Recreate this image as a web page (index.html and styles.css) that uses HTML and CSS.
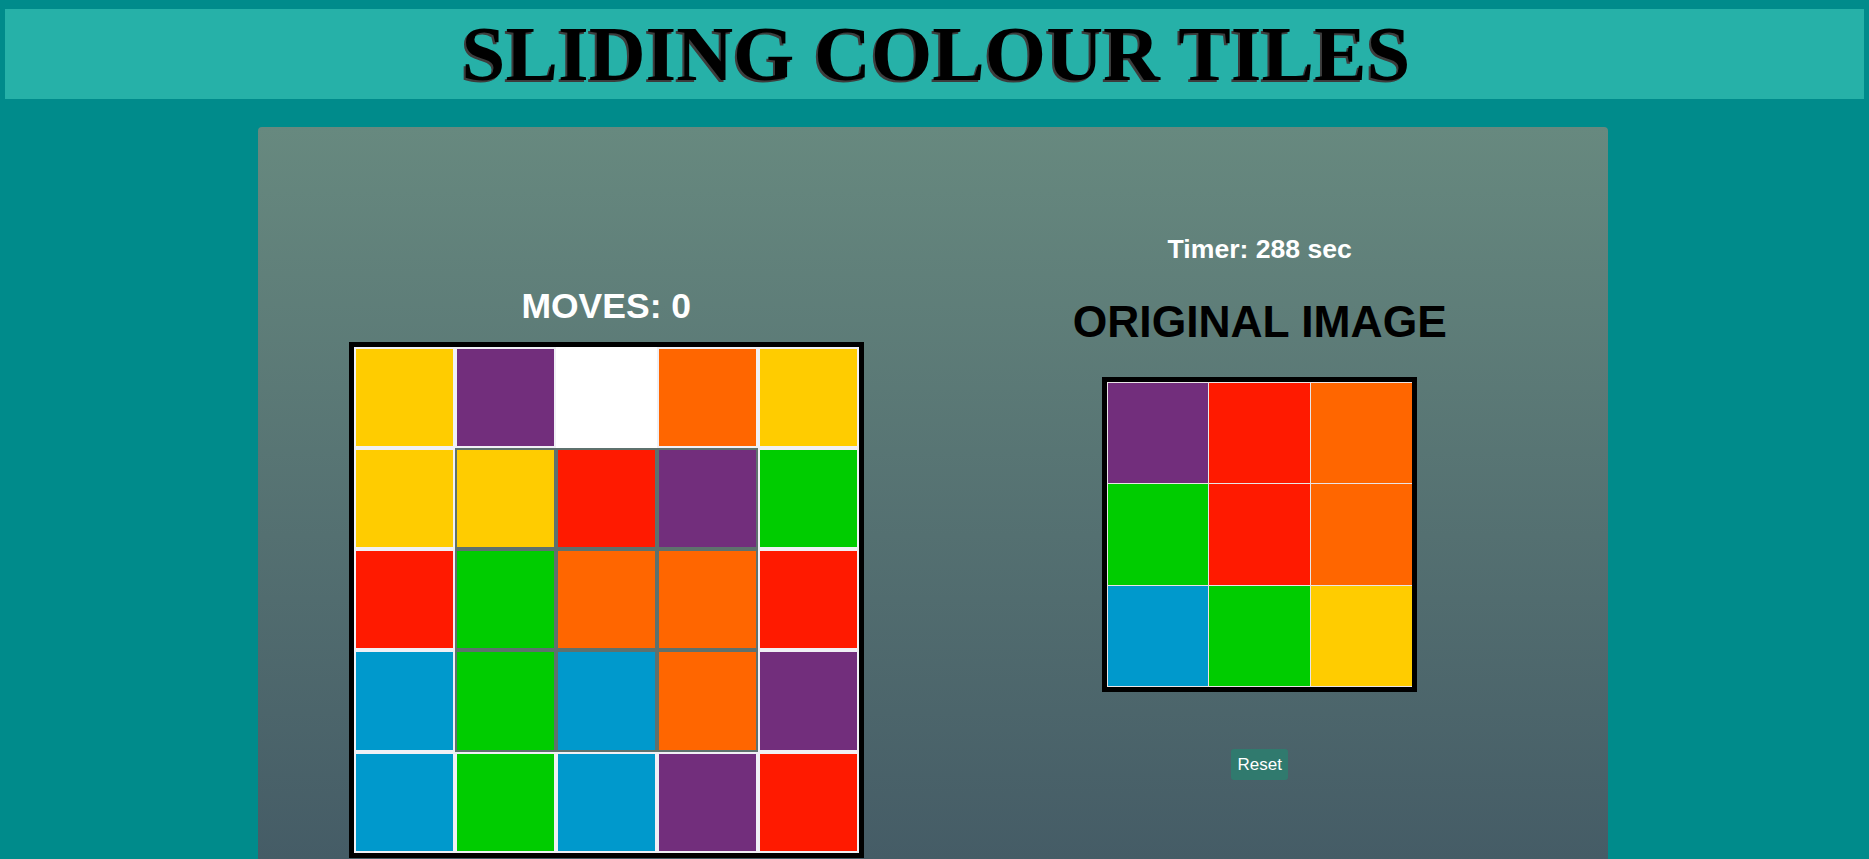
FILE: index.html
```html
<!DOCTYPE html>
<html lang="en">
<head>
<meta charset="utf-8">
<title>Sliding Colour Tiles</title>
<link rel="stylesheet" href="styles.css">
</head>
<body>
<header class="banner">
  <h1 class="banner-title">SLIDING COLOUR TILES</h1>
</header>
<main class="panel">
  <section class="col col-left">
    <div class="moves">MOVES: 0</div>
    <div class="board">
      <div class="tile yellow"></div>
      <div class="tile purple"></div>
      <div class="tile empty"></div>
      <div class="tile orange"></div>
      <div class="tile yellow"></div>

      <div class="tile yellow"></div>
      <div class="tile yellow inner"></div>
      <div class="tile red inner"></div>
      <div class="tile purple inner"></div>
      <div class="tile green"></div>

      <div class="tile red"></div>
      <div class="tile green inner"></div>
      <div class="tile orange inner"></div>
      <div class="tile orange inner"></div>
      <div class="tile red"></div>

      <div class="tile blue"></div>
      <div class="tile green inner"></div>
      <div class="tile blue inner"></div>
      <div class="tile orange inner"></div>
      <div class="tile purple"></div>

      <div class="tile blue"></div>
      <div class="tile green"></div>
      <div class="tile blue"></div>
      <div class="tile purple"></div>
      <div class="tile red"></div>
    </div>
  </section>
  <section class="col col-right">
    <div class="timer">Timer: 288 sec</div>
    <div class="orig-title">ORIGINAL IMAGE</div>
    <div class="target">
      <div class="cell purple"></div>
      <div class="cell red"></div>
      <div class="cell orange"></div>
      <div class="cell green"></div>
      <div class="cell red"></div>
      <div class="cell orange"></div>
      <div class="cell blue"></div>
      <div class="cell green"></div>
      <div class="cell yellow"></div>
    </div>
    <button class="reset" type="button">Reset</button>
  </section>
</main>
</body>
</html>
```

FILE: styles.css
```css
html, body {
  margin: 0;
  padding: 0;
}

body {
  background: #008b8b;
  font-family: "Liberation Sans", Arial, sans-serif;
}

.banner {
  margin: 9px 5px 0 5px;
  height: 90px;
  background: #26b1a8;
}

.banner-title {
  margin: 0;
  padding-left: 3px;
  font-family: "Liberation Serif", "Times New Roman", serif;
  font-weight: bold;
  font-size: 78.8px;
  line-height: 90px;
  text-align: center;
  color: #000;
  text-shadow: -2px 2px 0 #3d3d3d;
}

.panel {
  box-sizing: border-box;
  width: 1350px;
  height: 732px;
  margin: 28px 0 0 258px;
  padding: 0 21.5px;
  border-radius: 4px 4px 0 0;
  background: linear-gradient(#67897f, #455c66);
  display: grid;
  grid-template-columns: 1fr 1fr;
  align-items: start;
}

.col {
  display: flex;
  flex-direction: column;
  align-items: center;
}

.col-left {
  padding-top: 158.5px;
}

.col-right {
  padding-top: 107px;
}

.moves {
  color: #fff;
  font-weight: bold;
  font-size: 35.5px;
}

.board {
  margin-top: 15px;
  border: 5px solid #000;
  display: grid;
  grid-template-columns: repeat(5, 101px);
  grid-auto-rows: 101.3px;
}

.tile {
  box-sizing: border-box;
  border: 2px solid #f0f0f5;
}

.tile.inner {
  border-color: #5e716d;
}

.tile.empty {
  background: #fff;
  border-color: #fff;
}

.timer {
  color: #fff;
  font-weight: bold;
  font-size: 26.6px;
}

.orig-title {
  margin-top: 32px;
  color: #000;
  font-weight: bold;
  font-size: 44.4px;
}

.target {
  margin-top: 30px;
  box-sizing: border-box;
  width: 315px;
  height: 315px;
  border: 5px solid #000;
  padding: 0.5px;
  gap: 1px;
  background: #e9e4e6;
  display: grid;
  grid-template-columns: repeat(3, 1fr);
  grid-template-rows: repeat(3, 1fr);
}

.reset {
  margin-top: 56.5px;
  padding: 6px 6.5px;
  border: none;
  border-radius: 3px;
  background: #307a6e;
  color: #fff;
  font-family: "Liberation Sans", Arial, sans-serif;
  font-size: 17px;
  line-height: 19px;
}

.yellow { background: #ffcc00; }
.purple { background: #722e7c; }
.orange { background: #ff6600; }
.red { background: #ff1a00; }
.green { background: #00cc00; }
.blue { background: #0099cc; }
```
